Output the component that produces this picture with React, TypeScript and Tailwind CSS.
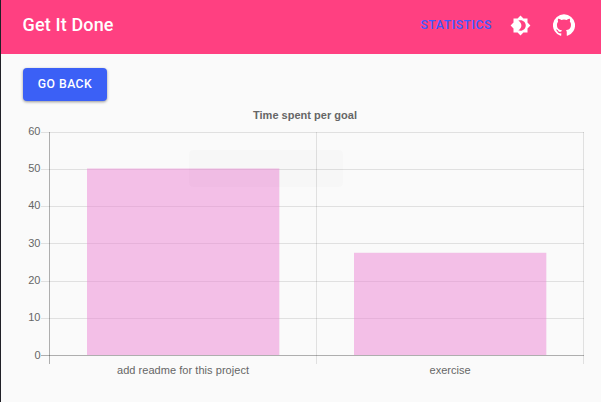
const TOP = 132.5;
const BOTTOM = 355.5;
const TICKS = [
  { value: 60, y: 132.5, labelY: 135 },
  { value: 50, y: 169.5, labelY: 172 },
  { value: 40, y: 206.5, labelY: 209 },
  { value: 30, y: 243.5, labelY: 247 },
  { value: 20, y: 281.5, labelY: 284 },
  { value: 10, y: 318.5, labelY: 321 },
  { value: 0, y: 355.5, labelY: 359 },
];
const GOALS = [
  { label: 'add readme for this project', x: 87, top: 168.5, center: 183, width: 132 },
  { label: 'exercise', x: 354, top: 252.8, center: 450, width: 41 },
];

function BrightnessIcon() {
  return (
    <svg viewBox="0 0 24 24" className="size-[21px] fill-white">
      <path d="M20 8.69V4h-4.69L12 .69 8.69 4H4v4.69L.69 12 4 15.31V20h4.69L12 23.31 15.31 20H20v-4.69L23.31 12 20 8.69zM12 18c-.89 0-1.74-.2-2.5-.55C11.56 16.5 13 14.42 13 12s-1.44-4.5-3.5-5.45C10.26 6.2 11.11 6 12 6c3.31 0 6 2.69 6 6s-2.69 6-6 6z" />
    </svg>
  );
}

function GitHubIcon() {
  return (
    <svg viewBox="0 0 24 24" className="size-[22px] fill-white">
      <path d="M12 .3a12 12 0 0 0-3.8 23.4c.6.1.8-.3.8-.6v-2c-3.3.7-4-1.6-4-1.6-.6-1.4-1.4-1.8-1.4-1.8-1-.7.1-.7.1-.7 1.2 0 1.9 1.2 1.9 1.2 1 1.8 2.8 1.3 3.5 1 0-.8.4-1.3.7-1.6-2.7-.3-5.5-1.3-5.5-6 0-1.2.5-2.3 1.3-3.1-.2-.4-.6-1.6 0-3.2 0 0 1-.3 3.4 1.2a11.5 11.5 0 0 1 6 0c2.3-1.5 3.3-1.2 3.3-1.2.6 1.6.2 2.8 0 3.2.9.8 1.3 1.9 1.3 3.2 0 4.6-2.8 5.6-5.5 5.9.5.4.9 1 .9 2.2v3.3c0 .3.1.7.8.6A12 12 0 0 0 12 .3" />
    </svg>
  );
}

function GoalChart() {
  return (
    <svg
      viewBox="1 101 600 301"
      className="block h-[301px] w-[600px] font-['Liberation_Sans',Arial,sans-serif] text-[11px]"
    >
      <text x="305" y="119" textAnchor="middle" textLength="104" className="fill-[#666] font-bold">
        Time spent per goal
      </text>
      {TICKS.map(({ value, y, labelY }) => (
        <g key={value}>
          <line x1="41" x2="584" y1={y} y2={y} className={value === 0 ? 'stroke-black/30' : 'stroke-black/10'} />
          <text x="40.5" y={labelY} textAnchor="end" className="fill-[#666]">
            {value}
          </text>
        </g>
      ))}
      <line x1="49.5" x2="49.5" y1={TOP - 0.5} y2="364" className="stroke-black/30" />
      <line x1="316.5" x2="316.5" y1={TOP - 0.5} y2="364" className="stroke-black/10" />
      <line x1="583.5" x2="583.5" y1={TOP - 0.5} y2="364" className="stroke-black/10" />
      {GOALS.map(({ label, x, top, center, width }) => (
        <g key={label}>
          <rect x={x} y={top} width="192.3" height={BOTTOM - 0.5 - top} className="fill-[#eb84d3]/50" />
          <text x={center} y="374" textAnchor="middle" textLength={width} className="fill-[#666]">
            {label}
          </text>
        </g>
      ))}
      <rect x="189" y="150" width="154" height="37" rx="4" className="fill-black/[0.01]" />
    </svg>
  );
}

export default function App() {
  return (
    <div className="h-[402px] w-[601px] overflow-hidden border-l border-[#202027] bg-[#fafafa] font-[Roboto,sans-serif]">
      <header className="flex h-[54px] items-center bg-[#ff4081] pr-[26px] pl-[21.5px] text-white">
        <h1 className="flex-1 pb-1 text-[18px] leading-6 font-medium tracking-[0.14px]">Get It Done</h1>
        <a className="mr-[18px] pb-1 text-[12.2px] leading-5 font-medium tracking-[0.55px] text-[#3d5afe]">STATISTICS</a>
        <div className="flex items-center gap-[22px] pb-1">
          <BrightnessIcon />
          <GitHubIcon />
        </div>
      </header>
      <main>
        <div className="flex h-[47px] items-end pl-[22px]">
          <button className="h-[33px] w-[84px] rounded-[4px] bg-[#3b60f6] text-[12.2px] leading-[33px] font-medium tracking-[0.5px] text-white shadow-[0_1px_3px_rgba(0,0,0,0.4)]">
            GO BACK
          </button>
        </div>
        <GoalChart />
      </main>
    </div>
  );
}
